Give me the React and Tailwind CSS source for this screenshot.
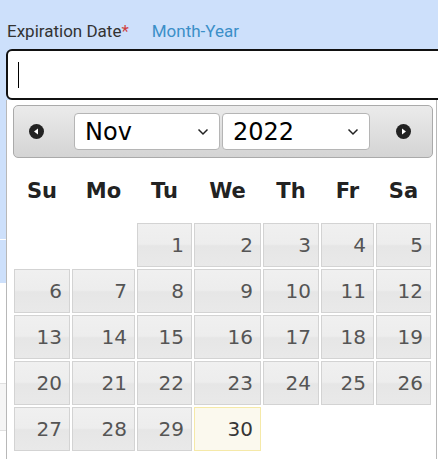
import React from "react";

function Circle({ dir }) {
  return (
    <svg width="15" height="15" viewBox="0 0 15 15" className="shrink-0">
      <circle cx="7.5" cy="7.5" r="7.5" fill="#222" />
      {dir === "prev" ? (
        <path d="M5 7.5 L9 4.5 L9 10.5 Z" fill="#fff" />
      ) : (
        <path d="M10 7.5 L6 4.5 L6 10.5 Z" fill="#fff" />
      )}
    </svg>
  );
}

function Chevron() {
  return (
    <svg width="12" height="8" viewBox="0 0 12 8" className="shrink-0">
      <path d="M1.5 1.5 L6 6 L10.5 1.5" fill="none" stroke="#222" strokeWidth="1.5" />
    </svg>
  );
}

function FakeSelect({ value, width }) {
  return (
    <div
      className={`h-[37px] bg-white border border-[#b5b5b5] rounded-[4px] flex items-center justify-between pl-[10px] pr-[10px] text-[24px] text-black ${width}`}
    >
      <span className="leading-none">{value}</span>
      <Chevron />
    </div>
  );
}

export default function App() {
  const days = ["Su", "Mo", "Tu", "We", "Th", "Fr", "Sa"];
  const cells = [null, null];
  for (let i = 1; i <= 30; i++) cells.push(i);
  while (cells.length < 35) cells.push(null);

  const cols = "grid grid-cols-[56px_63px_55px_67px_56px_53px_55px] gap-x-[2px]";

  return (
    <div className="w-[438px] h-[459px] overflow-hidden bg-white font-['Roboto',sans-serif]">
      <div className="bg-[#cde0fb] h-[49px] pt-[21px] pl-[7px] text-[17px] leading-[20px] flex">
        <span className="text-[#333]">Expiration Date</span>
        <span className="text-[#d04040]">*</span>
        <span className="ml-[23px] text-[#3b8fc8]">Month-Year</span>
      </div>
      <div className="bg-[#cde0fb] pl-[6px] h-[51px]">
        <div className="w-[460px] h-[51px] bg-white border-[2px] border-[#111] rounded-[6px] flex items-center pl-[10px]">
          <div className="w-px h-[26px] bg-black" />
        </div>
      </div>
      <div className="flex">
        <div className="w-[6px] shrink-0 flex flex-col">
          <div className="h-[139px] bg-[#cde0fb]" />
          <div className="h-[1px] bg-white" />
          <div className="h-[43px] bg-[#cde0fb]" />
          <div className="h-[100px] bg-white" />
          <div className="h-[48px] bg-[#f5f5f5] border-y border-[#e0e0e0]" />
        </div>
        <div className="w-[431px] h-[359px] bg-white border-l border-r border-[#b8b8b8] pl-[6px] pt-[5px] font-['DejaVu_Sans',sans-serif]">
          <div className="w-[420px] h-[53px] border border-[#aaa] rounded-[5px] bg-[linear-gradient(#ebebeb,#d4d4d4)] flex items-center pl-[15px]">
            <Circle dir="prev" />
            <div className="ml-[30px]">
              <FakeSelect value="Nov" width="w-[146px]" />
            </div>
            <div className="ml-[2px]">
              <FakeSelect value="2022" width="w-[148px]" />
            </div>
            <div className="ml-[26px]">
              <Circle dir="next" />
            </div>
          </div>
          <div className={`${cols} ml-[1px] mt-[14px] h-[40px]`}>
            {days.map((d) => (
              <div key={d} className="flex items-center justify-center text-[21px] font-bold text-[#222]">
                {d}
              </div>
            ))}
          </div>
          <div className={`${cols} gap-y-[2px] ml-[1px] mt-[11px]`}>
            {cells.map((c, i) =>
              c === null ? (
                <div key={i} className="h-[44px]" />
              ) : c === 30 ? (
                <div
                  key={i}
                  className="h-[44px] border border-[#f5e9a8] bg-[#fbf9ee] flex items-center justify-end pr-[7px] text-[20px] text-[#363636]"
                >
                  {c}
                </div>
              ) : (
                <div
                  key={i}
                  className="h-[44px] border border-[#d3d3d3] bg-[linear-gradient(#f0f0f0_0%,#ededed_48%,#e6e6e6_52%,#e9e9e9_100%)] flex items-center justify-end pr-[7px] text-[20px] text-[#555]"
                >
                  {c}
                </div>
              )
            )}
          </div>
        </div>
      </div>
    </div>
  );
}
